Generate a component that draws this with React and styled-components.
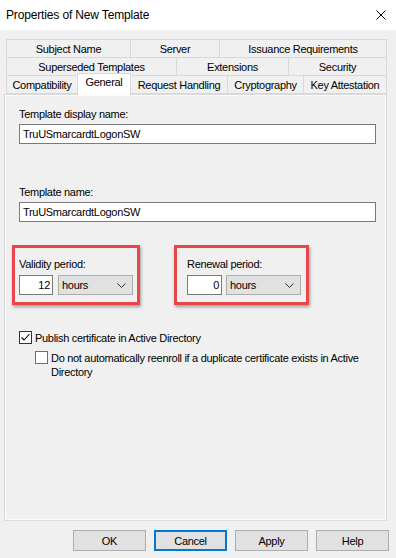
import React from "react";
import styled, { createGlobalStyle } from "styled-components";

const Global = createGlobalStyle`
  html, body { margin: 0; padding: 0; background: #f0f0f0; }
  body { font-family: "Liberation Sans", Arial, sans-serif; font-size: 11px; letter-spacing: -0.3px; color: #000; }
  * { box-sizing: border-box; }
`;

const Window = styled.div`
  width: 396px;
  height: 558px;
  background: #f0f0f0;
  display: flex;
  flex-direction: column;
  overflow: hidden;
`;

const TitleBar = styled.div`
  height: 30px;
  background: #fff;
  display: flex;
  align-items: center;
  justify-content: space-between;
  padding: 0 10px 0 6px;
  font-size: 12px;
  letter-spacing: -0.15px;
`;

const CloseBtn = styled.svg`
  width: 10px;
  height: 10px;
  display: block;
`;

const Tabs = styled.div`
  margin: 9px 0 0 6px;
  display: flex;
  flex-direction: column;
`;

const TabRow = styled.div`
  display: flex;
  align-items: flex-start;
`;

const Tab = styled.div`
  position: relative;
  width: ${(p) => p.$w + 1}px;
  height: ${(p) => (p.$active ? 22 : 19)}px;
  margin: ${(p) => (p.$active ? "-2px -1px -1px 0" : "0 -1px -1px 0")};
  border: 1px solid #d9d9d9;
  border-bottom: ${(p) => (p.$active ? "none" : "1px solid #d9d9d9")};
  background: ${(p) => (p.$active ? "#fff" : "#f0f0f0")};
  z-index: ${(p) => (p.$active ? 2 : 0)};
  display: flex;
  align-items: ${(p) => (p.$active ? "flex-start" : "center")};
  padding-top: ${(p) => (p.$active ? "2px" : "0")};
  justify-content: center;
  white-space: nowrap;
`;

const Panel = styled.div`
  margin: 0 9px 0 4px;
  height: 427px;
  border: 1px solid #dadada;
  box-shadow: inset 0 0 0 1px #fbfbfb;
  background: #f0f0f0;
  padding: 12px 10px 0 14px;
  display: flex;
  flex-direction: column;
`;

const Label = styled.div`
  height: 14px;
  line-height: 14px;
  margin-top: ${(p) => p.$mt || 0}px;
  white-space: nowrap;
`;

const TextBox = styled.div`
  height: 20px;
  margin-top: 3px;
  background: #fff;
  border: 1px solid #7a7a7a;
  display: flex;
  align-items: center;
  padding: 0 3px;
  width: ${(p) => (p.$w ? `${p.$w}px` : "100%")};
  justify-content: ${(p) => (p.$right ? "flex-end" : "flex-start")};
`;

const PeriodRow = styled.div`
  display: flex;
  margin: 23px 0 0 -7px;
  gap: 34px;
`;

const Highlight = styled.div`
  border: 3px solid #e9464c;
  box-shadow: 1px 2px 3px rgba(0, 0, 0, 0.35);
  padding: 9px ${(p) => p.$pr}px 7px ${(p) => p.$pl}px;
  display: flex;
  flex-direction: column;
  gap: 4px;
`;

const Controls = styled.div`
  display: flex;
  gap: ${(p) => p.$gap}px;
`;

const NumBox = styled(TextBox)`
  margin-top: 0;
  padding: 0 2px 0 0;
`;

const Select = styled.div`
  width: 75px;
  height: 20px;
  background: #e1e1e1;
  border: 1px solid #adadad;
  display: flex;
  align-items: center;
  justify-content: space-between;
  padding: 0 6px 0 3px;
`;

const Chevron = styled.svg`
  width: 9px;
  height: 5px;
  display: block;
`;

const CheckRow = styled.div`
  display: flex;
  align-items: flex-start;
  gap: 3px;
  margin-top: ${(p) => p.$mt}px;
  margin-left: ${(p) => p.$ml || 0}px;
  line-height: 14px;
`;

const Box = styled.div`
  width: 13px;
  height: 13px;
  flex: none;
  background: #fff;
  border: 1px solid ${(p) => (p.$focus ? "#3d77cc" : "#333")};
  display: flex;
  align-items: center;
  justify-content: center;
`;

const Buttons = styled.div`
  display: flex;
  justify-content: flex-end;
  gap: 8px;
  padding: 9px 7px 0 0;
`;

const Button = styled.div`
  width: 73px;
  height: 21px;
  background: #e1e1e1;
  border: ${(p) => (p.$default ? "2px solid #0078d7" : "1px solid #adadad")};
  display: flex;
  align-items: center;
  justify-content: center;
`;

const rows = [
  [
    ["Subject Name", 124],
    ["Server", 89],
    ["Issuance Requirements", 167],
  ],
  [
    ["Superseded Templates", 170],
    ["Extensions", 112],
    ["Security", 98],
  ],
  [
    ["Compatibility", 71],
    ["General", 53, true],
    ["Request Handling", 97],
    ["Cryptography", 76],
    ["Key Attestation", 83],
  ],
];

const ChevronIcon = () => (
  <Chevron viewBox="0 0 9 5">
    <path d="M0.5 0.5 L4.5 4.5 L8.5 0.5" fill="none" stroke="#333" strokeWidth="1" />
  </Chevron>
);

const Period = ({ label, value, pl, pr, gap, numW }) => (
  <Highlight $pl={pl} $pr={pr}>
    <Label>{label}</Label>
    <Controls $gap={gap}>
      <NumBox $w={numW} $right>{value}</NumBox>
      <Select>
        <span>hours</span>
        <ChevronIcon />
      </Select>
    </Controls>
  </Highlight>
);

export default function App() {
  return (
    <Window>
      <Global />
      <TitleBar>
        <span>Properties of New Template</span>
        <CloseBtn viewBox="0 0 10 10">
          <path d="M0.5 0.5 L9.5 9.5 M9.5 0.5 L0.5 9.5" stroke="#000" strokeWidth="1" />
        </CloseBtn>
      </TitleBar>
      <Tabs>
        {rows.map((r, i) => (
          <TabRow key={i}>
            {r.map(([t, w, a]) => (
              <Tab key={t} $w={w} $active={a}>
                {t}
              </Tab>
            ))}
          </TabRow>
        ))}
      </Tabs>
      <Panel>
        <Label>Template display name:</Label>
        <TextBox>TruUSmarcardtLogonSW</TextBox>
        <Label $mt={41}>Template name:</Label>
        <TextBox>TruUSmarcardtLogonSW</TextBox>
        <PeriodRow>
          <Period label="Validity period:" value="12" pl={4} pr={4} gap={5} numW={34} />
          <Period label="Renewal period:" value="0" pl={10} pr={5} gap={4} numW={35} />
        </PeriodRow>
        <CheckRow $mt={26}>
          <Box>
            <svg width="11" height="11" viewBox="0 0 11 11">
              <path d="M1.5 5.5 L4 8 L9.5 2" fill="none" stroke="#000" strokeWidth="1.1" />
            </svg>
          </Box>
          <span>Publish certificate in Active Directory</span>
        </CheckRow>
        <CheckRow $mt={6} $ml={16}>
          <Box $focus />
          <span>
            Do not automatically reenroll if a duplicate certificate exists in Active
            <br />
            Directory
          </span>
        </CheckRow>
      </Panel>
      <Buttons>
        <Button>OK</Button>
        <Button $default>Cancel</Button>
        <Button>Apply</Button>
        <Button>Help</Button>
      </Buttons>
    </Window>
  );
}
